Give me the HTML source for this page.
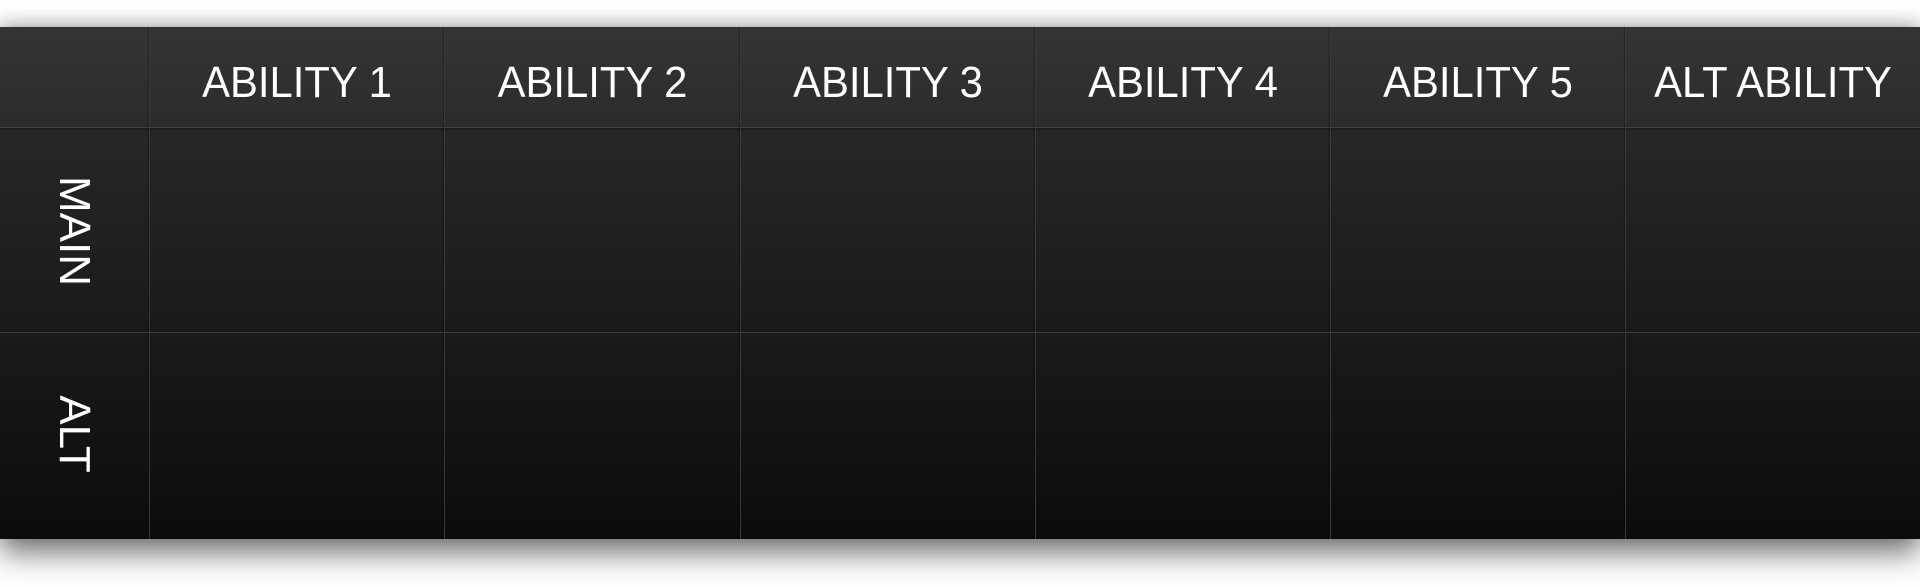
<!DOCTYPE html>
<html><head><meta charset="utf-8"><style>
html,body{margin:0;padding:0;background:#fff;width:1920px;height:586px;overflow:hidden}
.t{position:absolute;left:0;top:27px;width:1920px;height:512px;
background:linear-gradient(#2e2e2e,#0c0c0c);
box-shadow:0 14px 28px rgba(0,0,0,.55),0 -6px 16px rgba(0,0,0,.18);}
.hdr{position:absolute;left:0;top:0;width:1920px;height:100px;background:linear-gradient(#343434,#2c2c2c);box-shadow:0 2px 3px rgba(0,0,0,.5);}
.v{position:absolute;top:0;width:1px;height:512px;background:#3a3a3a;box-shadow:-1px 0 1px rgba(0,0,0,.35)}
.h{position:absolute;left:0;width:1920px;height:1px;background:#3c3c3c}
.lab{position:absolute;top:6px;height:100px;line-height:100px;text-align:center;color:#fff;
font-family:"Liberation Sans",sans-serif;font-size:44px;transform:scaleX(.95);letter-spacing:0}
.side{position:absolute;color:#fff;font-family:"Liberation Sans",sans-serif;font-size:44px;
transform:translate(-50%,-50%) rotate(90deg);white-space:nowrap;transform-origin:center}
</style></head><body>
<div class="t">
<div class="hdr"></div>
<div class="h" style="top:100px;background:#444"></div>
<div class="h" style="top:305px"></div>
<div class="v" style="left:149px"></div>
<div class="v" style="left:444px"></div>
<div class="v" style="left:740px"></div>
<div class="v" style="left:1035px"></div>
<div class="v" style="left:1330px"></div>
<div class="v" style="left:1625px"></div>
<div class="lab" style="left:150px;width:294px">ABILITY 1</div>
<div class="lab" style="left:445px;width:295px">ABILITY 2</div>
<div class="lab" style="left:741px;width:294px">ABILITY 3</div>
<div class="lab" style="left:1036px;width:294px">ABILITY 4</div>
<div class="lab" style="left:1331px;width:294px">ABILITY 5</div>
<div class="lab" style="left:1626px;width:294px">ALT ABILITY</div>
<div class="side" style="left:74px;top:204px">MAIN</div>
<div class="side" style="left:74px;top:407px">ALT</div>
</div>
</body></html>
